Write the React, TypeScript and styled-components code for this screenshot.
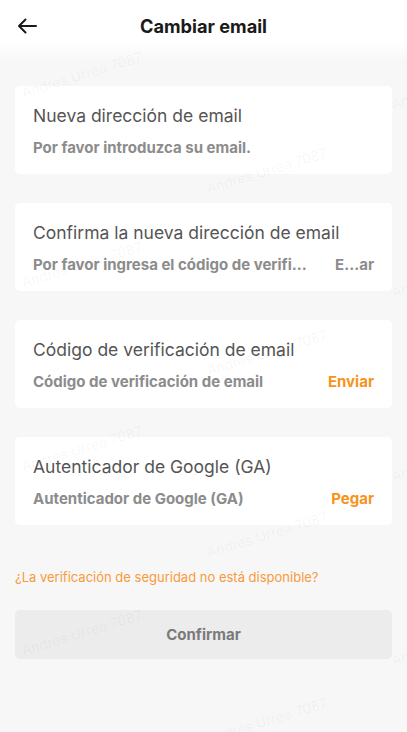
import React from "react";
import styled, { createGlobalStyle } from "styled-components";

const GlobalStyle = createGlobalStyle`
  html, body {
    margin: 0;
    padding: 0;
    background: #f7f7f7;
  }
  body {
    font-family: Inter, "Noto Sans", "Liberation Sans", sans-serif;
  }
  * {
    box-sizing: border-box;
  }
`;

interface IField {
  title: string;
  hint: string;
  action?: string;
  muted?: boolean;
}

const fields: IField[] = [
  { title: "Nueva dirección de email", hint: "Por favor introduzca su email." },
  {
    title: "Confirma la nueva dirección de email",
    hint: "Por favor ingresa el código de verifi...",
    action: "E...ar",
    muted: true,
  },
  {
    title: "Código de verificación de email",
    hint: "Código de verificación de email",
    action: "Enviar",
  },
  {
    title: "Autenticador de Google (GA)",
    hint: "Autenticador de Google (GA)",
    action: "Pegar",
  },
];

// watermark spots, the pattern repeats down the page
const marks = [
  { x: 22, y: 72 },
  { x: 392, y: 84 },
  { x: 207, y: 168 },
  { x: 22, y: 262 },
  { x: 392, y: 272 },
  { x: 207, y: 350 },
  { x: 22, y: 446 },
  { x: 392, y: 456 },
  { x: 207, y: 532 },
  { x: 22, y: 630 },
  { x: 392, y: 640 },
  { x: 207, y: 718 },
];

const BackIcon = () => (
  <svg width="20" height="16" viewBox="0 0 20 16" fill="none">
    <path
      d="M19 8H2M8.5 1.5L2 8l6.5 6.5"
      stroke="#1a1a1a"
      strokeWidth="2"
      strokeLinecap="round"
      strokeLinejoin="round"
    />
  </svg>
);

const App = (): JSX.Element => {
  return (
    <Page>
      <GlobalStyle />
      <Header>
        <BackButton>
          <BackIcon />
        </BackButton>
        <Title>Cambiar email</Title>
      </Header>
      <Content>
        {fields.map((f) => (
          <Card key={f.title}>
            <FieldTitle>{f.title}</FieldTitle>
            <HintRow>
              <Hint>{f.hint}</Hint>
              {f.action && <Action muted={f.muted}>{f.action}</Action>}
            </HintRow>
          </Card>
        ))}
        <HelpLink>¿La verificación de seguridad no está disponible?</HelpLink>
        <ConfirmButton>Confirmar</ConfirmButton>
      </Content>
      <Watermarks>
        {marks.map((m, i) => (
          <Mark key={i} style={{ left: m.x, top: m.y }}>
            Andres Urrea 7087
          </Mark>
        ))}
      </Watermarks>
    </Page>
  );
};

const Page = styled.div`
  position: relative;
  min-height: 732px;
  overflow: hidden;
  background: #f7f7f7;
`;

const Header = styled.div`
  position: relative;
  height: 62px;
  display: flex;
  align-items: flex-start;
  justify-content: center;
  padding-top: 13px;
  background: linear-gradient(#ffffff 0, #ffffff 42px, #f7f7f7 62px);
`;

const BackButton = styled.div`
  position: absolute;
  left: 17px;
  top: 18px;
  display: flex;
`;

const Title = styled.div`
  font-size: 18.2px;
  line-height: 27px;
  font-weight: 700;
  color: #1a1a1a;
`;

const Content = styled.div`
  display: flex;
  flex-direction: column;
  padding: 24px 15px 0;
`;

const Card = styled.div`
  height: 88px;
  margin-bottom: 29px;
  padding: 18px 18px 16px;
  background: #ffffff;
  border-radius: 5px;
  display: flex;
  flex-direction: column;
  gap: 10px;
`;

const FieldTitle = styled.div`
  font-size: 17.5px;
  line-height: 24px;
  color: #555555;
  white-space: nowrap;
`;

const HintRow = styled.div`
  display: flex;
  justify-content: space-between;
  align-items: center;
  line-height: 20px;
`;

const Hint = styled.div`
  font-size: 15px;
  font-weight: 700;
  color: #8c8c8c;
  white-space: nowrap;
`;

const Action = styled.div<{ muted?: boolean }>`
  font-size: 15px;
  font-weight: 700;
  color: ${(p) => (p.muted ? "#8c8c8c" : "#f7931a")};
`;

const HelpLink = styled.div`
  margin-top: 13px;
  font-size: 13px;
  line-height: 20px;
  color: #f79a3a;
`;

const ConfirmButton = styled.div`
  margin-top: 23px;
  height: 49px;
  display: flex;
  align-items: center;
  justify-content: center;
  border-radius: 5px;
  background: #ececec;
  color: #7a7a7a;
  font-size: 15px;
  font-weight: 700;
`;

const Watermarks = styled.div`
  position: absolute;
  inset: 0;
  pointer-events: none;
`;

const Mark = styled.div`
  position: absolute;
  font-size: 14px;
  color: rgba(0, 0, 0, 0.045);
  white-space: nowrap;
  transform-origin: left center;
  transform: translateY(12px) rotate(-17deg);
`;

export default App;
